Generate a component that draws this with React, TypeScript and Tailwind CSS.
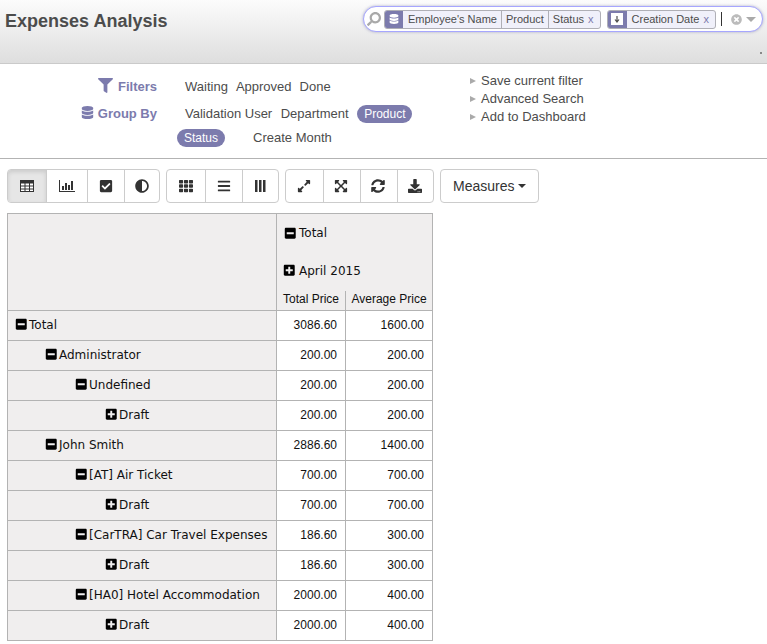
import { FaAdjust, FaBars, FaCheckSquare, FaDatabase, FaDownload, FaExpandAlt, FaExpandArrowsAlt, FaFilter, FaMinusSquare, FaPlusSquare, FaSearch, FaSyncAlt, FaTh, FaTimesCircle } from "react-icons/fa";
import type { ReactNode } from "react";

function TableIcon() {
  return (
    <svg width="14" height="12" viewBox="0 0 14 12" fill="none" stroke="#333" strokeWidth="1">
      <rect x="0.5" y="0.5" width="13" height="11" fill="#fff" />
      <rect x="0.5" y="0.5" width="13" height="2.5" fill="#333" />
      <path d="M0.5 6H13.5M0.5 9H13.5M5 3V11.5M9.5 3V11.5" />
    </svg>
  );
}

function BarIcon() {
  return (
    <svg width="16" height="12" viewBox="0 0 16 12" fill="#333">
      <path d="M0 0h1v11h15v1H0z" />
      <rect x="3" y="6" width="2" height="4" />
      <rect x="6" y="3" width="2" height="7" />
      <rect x="9" y="5" width="2" height="5" />
      <rect x="12" y="1" width="2" height="9" />
    </svg>
  );
}

function ColumnsIcon() {
  return (
    <svg width="11" height="12" viewBox="0 0 11 12" fill="#333">
      <rect x="0" y="0" width="2.5" height="12" />
      <rect x="4" y="0" width="2.5" height="12" />
      <rect x="8" y="0" width="2.5" height="12" />
    </svg>
  );
}

function SortIcon() {
  return (
    <svg width="12" height="12" viewBox="0 0 12 12">
      <rect width="12" height="12" fill="#fff" />
      <path d="M6 3v5M4 6.5L6 9l2-2.5" fill="none" stroke="#4c4c4c" strokeWidth="1.2" />
    </svg>
  );
}

type Btn = { icon: ReactNode; w: string };

function Group({ items, active }: { items: Btn[]; active?: number }) {
  return (
    <div className="flex h-[34px] rounded-[4px] border border-[#ccc] bg-white">
      {items.map((b, i) => (
        <div
          key={i}
          className={`flex items-center justify-center border-[#ccc] text-[14px] text-[#333] [&:not(:first-child)]:border-l ${b.w} ${
            active === i ? "rounded-l-[3px] bg-[#e6e6e6] shadow-[inset_0_2px_4px_rgba(0,0,0,0.12)]" : ""
          }`}
        >
          {b.icon}
        </div>
      ))}
    </div>
  );
}

function Facet({ icon, values, iconW }: { icon: ReactNode; values: string[]; iconW: string }) {
  return (
    <div className="flex h-[19px] items-stretch overflow-hidden rounded-[3px] border border-[#afafb6] bg-[#f0f0fa] text-[11px] leading-[17px] text-[#4c4c4c]">
      <div className={`flex items-center justify-center bg-[#7c7bad] text-white ${iconW}`}>{icon}</div>
      {values.map((v, i) => (
        <span key={v} className={`pr-[4px] ${i > 0 ? "border-l border-[#afafb6] pl-[4px]" : "pl-[5px]"} ${i === values.length - 1 ? "pr-[6px]" : ""}`}>
          {v}
          {i === values.length - 1 && <span className="ml-[4px] text-[#7c7bad]">x</span>}
        </span>
      ))}
    </div>
  );
}

function Header() {
  return (
    <div className="flex h-[64px] items-start justify-between border-b border-[#cacaca] bg-gradient-to-b from-[#fcfcfc] to-[#dedede] pl-[5px] pr-1">
      <h1 className="mt-[10px] text-[18px] leading-[22px] font-bold text-[#4c4c4c]">Expenses Analysis</h1>
      <div className="relative h-full">
        <div className="mt-[6px] flex h-[26px] w-[400px] items-center rounded-[13px] border border-[#a6a6fe] bg-white pl-[3px] shadow-[0_0_3px_rgba(124,123,173,0.6)]">
          <FaSearch className="mr-[3px] size-[14px] scale-x-[-1] text-[#a9a9a9]" />
          <Facet iconW="w-[18px]" icon={<FaDatabase className="size-[10px]" />} values={["Employee's Name", "Product", "Status"]} />
          <div className="w-[6px]" />
          <Facet iconW="w-[19px]" icon={<SortIcon />} values={["Creation Date"]} />
          <div className="ml-[5px] h-[14px] w-px bg-[#333]" />
          <FaTimesCircle className="ml-[9px] size-[11px] text-[#bbb]" />
          <div className="ml-[4px] h-0 w-0 border-x-[5px] border-t-[5px] border-x-transparent border-t-[#aaa]" />
        </div>
        <div className="absolute right-[1px] bottom-[9px] size-[2px] bg-[#888]" />
      </div>
    </div>
  );
}

function Pill({ children }: { children: ReactNode }) {
  return <span className="rounded-[9px] bg-[#7c7bad] px-[7px] text-[12px] text-white">{children}</span>;
}

function SearchDrawer() {
  return (
    <div className="flex h-[95px] border-b border-[#b3b3b3] bg-white text-[13px] leading-[18px] text-[#4c4c4c]">
      <div className="w-[470px] pt-[14px]">
        <div className="flex h-[27px] items-start">
          <div className="flex w-[157px] items-center justify-end gap-[5px] font-bold text-[#7c7bad]">
            <FaFilter className="size-[15px] -translate-y-[2px]" />
            Filters
          </div>
          <div className="ml-[28px] flex gap-[8px]">
            <span>Waiting</span>
            <span>Approved</span>
            <span>Done</span>
          </div>
        </div>
        <div className="flex h-[24px] items-start">
          <div className="flex w-[157px] items-center justify-end gap-[4px] font-bold text-[#7c7bad]">
            <FaDatabase className="size-[13px] -translate-y-[2px]" />
            Group By
          </div>
          <div className="ml-[28px] flex gap-[8.5px]">
            <span>Validation User</span>
            <span>Department</span>
            <Pill>Product</Pill>
          </div>
        </div>
        <div className="ml-[177px] flex gap-[28px]">
          <Pill>Status</Pill>
          <span>Create Month</span>
        </div>
      </div>
      <div className="pt-[8px]">
        {["Save current filter", "Advanced Search", "Add to Dashboard"].map((t) => (
          <div key={t} className="flex items-center">
            <span className="mr-[5px] h-0 w-0 border-y-[3.5px] border-l-[6px] border-y-transparent border-l-[#aaa]" />
            {t}
          </div>
        ))}
      </div>
    </div>
  );
}

const rows = [
  { label: "Total", depth: 0, open: true, a: "3086.60", b: "1600.00" },
  { label: "Administrator", depth: 1, open: true, a: "200.00", b: "200.00" },
  { label: "Undefined", depth: 2, open: true, a: "200.00", b: "200.00" },
  { label: "Draft", depth: 3, open: false, a: "200.00", b: "200.00" },
  { label: "John Smith", depth: 1, open: true, a: "2886.60", b: "1400.00" },
  { label: "[AT] Air Ticket", depth: 2, open: true, a: "700.00", b: "700.00" },
  { label: "Draft", depth: 3, open: false, a: "700.00", b: "700.00" },
  { label: "[CarTRA] Car Travel Expenses", depth: 2, open: true, a: "186.60", b: "300.00" },
  { label: "Draft", depth: 3, open: false, a: "186.60", b: "300.00" },
  { label: "[HA0] Hotel Accommodation", depth: 2, open: true, a: "2000.00", b: "400.00" },
  { label: "Draft", depth: 3, open: false, a: "2000.00", b: "400.00" },
];

function Toggle({ open }: { open: boolean }) {
  return open ? <FaMinusSquare className="mr-[1.5px] size-[12.5px] shrink-0 text-black" /> : <FaPlusSquare className="mr-[1.5px] size-[12.5px] shrink-0 text-black" />;
}

function Pivot() {
  return (
    <table className="ml-[7px] mt-[10px] w-[425px] table-fixed border-collapse border border-[#b3b3b3] text-[12px] text-[#111]">
      <colgroup>
        <col className="w-[269px]" />
        <col className="w-[69px]" />
        <col className="w-[87px]" />
      </colgroup>
      <thead>
        <tr className="h-[37px]">
          <th rowSpan={3} className="border border-[#b3b3b3] bg-[#f0eeee]" />
          <th colSpan={2} className="border-x border-[#b3b3b3] bg-[#f0eeee] pt-[2px] pl-[7px] text-left font-normal">
            <div className="flex items-center font-['DejaVu_Sans',sans-serif] text-[12px]">
              <Toggle open />
              <span className="ml-[1px]">Total</span>
            </div>
          </th>
        </tr>
        <tr className="h-[40px]">
          <th colSpan={2} className="border-x border-[#b3b3b3] bg-[#f0eeee] pl-[6px] text-left font-normal">
            <div className="flex items-center font-['DejaVu_Sans',sans-serif] text-[12px]">
              <Toggle open={false} />
              <span className="ml-[2px]">April 2015</span>
            </div>
          </th>
        </tr>
        <tr className="h-[20px]">
          <th className="border border-t-0 border-[#b3b3b3] bg-[#f0eeee] pb-[2px] text-center leading-[16px] font-normal">Total Price</th>
          <th className="border border-t-0 border-[#b3b3b3] bg-[#f0eeee] pb-[2px] text-center leading-[16px] font-normal">Average Price</th>
        </tr>
      </thead>
      <tbody>
        {rows.map((r, i) => (
          <tr key={i} className="h-[30px]">
            <td className="border border-[#b3b3b3] bg-[#f0eeee] pb-[2px] pr-0">
              <div
                className="flex items-center font-['DejaVu_Sans',sans-serif] text-[12px] whitespace-nowrap"
                style={{ paddingLeft: 7 + r.depth * 30 }}
              >
                <Toggle open={r.open} />
                {r.label}
              </div>
            </td>
            <td className="border border-[#b3b3b3] pb-[2px] pr-[8px] text-right">{r.a}</td>
            <td className="border border-[#b3b3b3] pb-[2px] pr-[8px] text-right">{r.b}</td>
          </tr>
        ))}
      </tbody>
    </table>
  );
}

export default function App() {
  return (
    <div className="h-[644px] w-[767px] overflow-hidden bg-white font-['Liberation_Sans',Arial,sans-serif]">
      <Header />
      <SearchDrawer />
      <div className="flex gap-[6px] pt-[10px] pl-[7px]">
        <Group
          active={0}
          items={[
            { icon: <TableIcon />, w: "w-[38px] pr-[1px]" },
            { icon: <BarIcon />, w: "w-[41px] pr-[1px]" },
            { icon: <FaCheckSquare />, w: "w-[37px] pr-[1px]" },
            { icon: <FaAdjust />, w: "w-[35px]" },
          ]}
        />
        <Group
          items={[
            { icon: <FaTh />, w: "w-[38px]" },
            { icon: <FaBars />, w: "w-[37px] pr-[1px]" },
            { icon: <ColumnsIcon />, w: "w-[36px]" },
          ]}
        />
        <Group
          items={[
            { icon: <FaExpandAlt />, w: "w-[37px] pr-[2px]" },
            { icon: <FaExpandArrowsAlt />, w: "w-[37px] pr-[2px]" },
            { icon: <FaSyncAlt />, w: "w-[37px] pr-[2px]" },
            { icon: <FaDownload />, w: "w-[36px] pr-[2px]" },
          ]}
        />
        <div className="flex h-[34px] items-center rounded-[4px] border border-[#ccc] px-[12px] text-[14px] text-[#333]">
          Measures
          <span className="ml-[4px] h-0 w-0 border-x-[4px] border-t-[4px] border-x-transparent border-t-[#333]" />
        </div>
      </div>
      <Pivot />
    </div>
  );
}
